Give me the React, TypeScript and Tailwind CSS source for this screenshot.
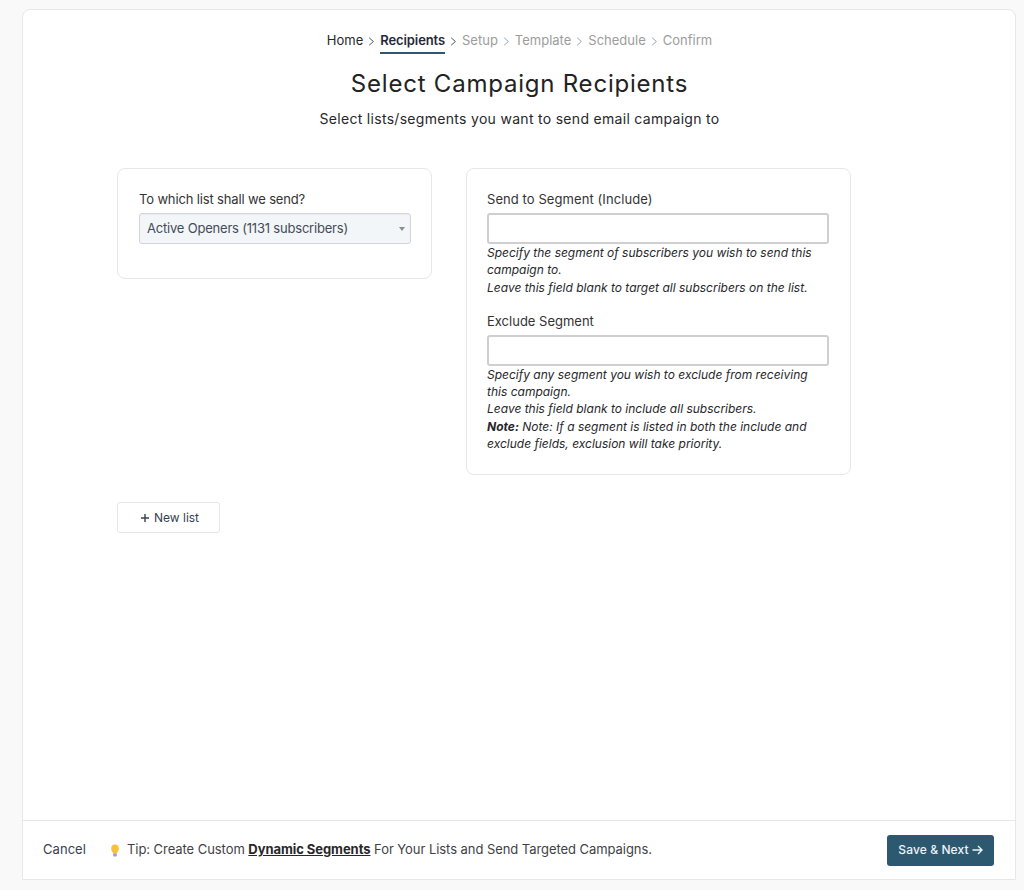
const font = "[font-family:Inter,'Liberation_Sans',sans-serif]";

function Chevron({ dark }: { dark?: boolean }) {
  return (
    <svg width="7" height="9" viewBox="0 0 7 9" fill="none" className="mt-[7px] shrink-0">
      <path d="M1.2 0.8 L5.4 4.5 L1.2 8.2" stroke={dark ? "#4b5563" : "#9ca3af"} strokeWidth="1" />
    </svg>
  );
}

function Crumb({ label, state }: { label: string; state: "done" | "active" | "todo" }) {
  if (state === "active") {
    return (
      <span className="h-[24px] border-b-2 border-[#2c5970] text-[13px] leading-[20px] font-semibold tracking-[-0.1px] text-[#1f2937]">
        {label}
      </span>
    );
  }
  return (
    <span className={`h-[24px] text-[13px] leading-[20px] ${state === "done" ? "text-[#27272a]" : "text-[#9c9c9c]"}`}>
      {label}
    </span>
  );
}

function Bulb() {
  return (
    <svg width="10" height="13" viewBox="0 0 12 14" preserveAspectRatio="none" className="shrink-0">
      <path d="M6 0.5 A4.6 4.6 0 0 0 1.4 5.1 C1.4 7 2.8 7.9 3.6 10 H8.4 C9.2 7.9 10.6 7 10.6 5.1 A4.6 4.6 0 0 0 6 0.5 Z" fill="#fbbf3c" />
      <rect x="3.8" y="10" width="4.4" height="3.4" rx="1" fill="#a99bc0" />
    </svg>
  );
}

export default function App() {
  return (
    <div className={`h-[890px] w-[1024px] overflow-hidden bg-[#f9f9fa] pt-[9px] pl-[22px] ${font}`}>
      <div className="flex h-[871px] w-[994px] flex-col rounded-t-[8px] border border-[#e5e7eb] bg-white">
        <main className="flex-1 pt-[20px]">
          <nav className="flex items-start justify-center gap-[5px] pl-[1px]">
            <Crumb label="Home" state="done" />
            <Chevron dark />
            <Crumb label="Recipients" state="active" />
            <Chevron dark />
            <Crumb label="Setup" state="todo" />
            <Chevron />
            <Crumb label="Template" state="todo" />
            <Chevron />
            <Crumb label="Schedule" state="todo" />
            <Chevron />
            <Crumb label="Confirm" state="todo" />
          </nav>
          <h1 className="mt-[12px] pl-[1px] text-center text-[24px] leading-[36px] font-normal tracking-[0.78px] text-[#222222]">
            Select Campaign Recipients
          </h1>
          <p className="mt-[6px] pl-[1px] text-center text-[14px] leading-[22px] tracking-[0.3px] text-[#27272a]">
            Select lists/segments you want to send email campaign to
          </p>

          <div className="mt-[38px] ml-[94px] flex items-start gap-[34px]">
            <section className="h-[111px] w-[315px] rounded-[8px] border border-[#e5e7eb] px-[21px] pt-[20px]">
              <label className="block text-[13px] leading-[20px] tracking-[-0.15px] text-[#333333]">To which list shall we send?</label>
              <div className="mt-[4px] flex h-[31px] w-[272px] items-center justify-between rounded-[3px] border border-[#d1d5db] bg-[#f3f6f9] pr-[5px] pl-[7px] shadow-[inset_0_1px_1px_rgba(0,0,0,0.04)]">
                <span className="text-[13px] tracking-[-0.2px] text-[#444c57]">Active Openers (1131 subscribers)</span>
                <span className="h-0 w-0 border-x-[3.5px] border-t-[4px] border-x-transparent border-t-[#8a8f96]" />
              </div>
            </section>

            <section className="h-[307px] w-[385px] rounded-[8px] border border-[#e5e7eb] px-[20px] pt-[20px]">
              <label className="block text-[13px] leading-[20px] tracking-[0.08px] text-[#333333]">Send to Segment (Include)</label>
              <div className="mt-[4px] h-[31px] w-[342px] rounded-[3px] border-2 border-[#cfcfcf] bg-white" />
              <p className="text-[12px] leading-[17.3px] text-[#27272a] italic">
                Specify the segment of subscribers you wish to send this
                <br />
                campaign to.
                <br />
                Leave this field blank to target all subscribers on the list.
              </p>
              <label className="mt-[15px] block text-[13px] leading-[20px] text-[#333333]">Exclude Segment</label>
              <div className="mt-[4px] h-[31px] w-[342px] rounded-[3px] border-2 border-[#cfcfcf] bg-white" />
              <p className="text-[12px] leading-[17.3px] text-[#27272a] italic">
                Specify any segment you wish to exclude from receiving
                <br />
                this campaign.
                <br />
                Leave this field blank to include all subscribers.
                <br />
                <strong className="font-bold">Note:</strong> Note: If a segment is listed in both the include and
                <br />
                exclude fields, exclusion will take priority.
              </p>
            </section>
          </div>

          <button className="mt-[27px] ml-[94px] flex h-[31px] w-[103px] items-center justify-center gap-[4px] rounded-[3px] border border-[#e5e7eb] bg-white pl-[2px] text-[12px] text-[#374151]">
            <svg width="10" height="10" viewBox="0 0 10 10">
              <path d="M5 1 V9 M1 5 H9" stroke="#374151" strokeWidth="1.4" />
            </svg>
            New list
          </button>
        </main>

        <footer className="flex h-[59px] items-center border-t border-[#e5e7eb] pr-[21px] pl-[20px]">
          <span className="w-[67px] text-[13px] tracking-[0.05px] text-[#374151]">Cancel</span>
          <Bulb />
          <span className="ml-[7px] text-[13px] tracking-[-0.06px] text-[#3f3f46]">
            Tip: Create Custom <a className="font-bold text-[#27272a] underline">Dynamic Segments</a> For Your Lists and Send Targeted Campaigns.
          </span>
          <button className="ml-auto flex h-[31px] w-[107px] items-center justify-center gap-[3px] rounded-[3px] bg-[#2c5970] text-[12px] font-medium tracking-[0.1px] text-[#eef4f7]">
            Save &amp; Next
            <svg width="11" height="10" viewBox="0 0 11 10" fill="none">
              <path d="M0.5 5 H9.8 M6 1 L10 5 L6 9" stroke="#eef4f7" strokeWidth="1.4" />
            </svg>
          </button>
        </footer>
      </div>
    </div>
  );
}
